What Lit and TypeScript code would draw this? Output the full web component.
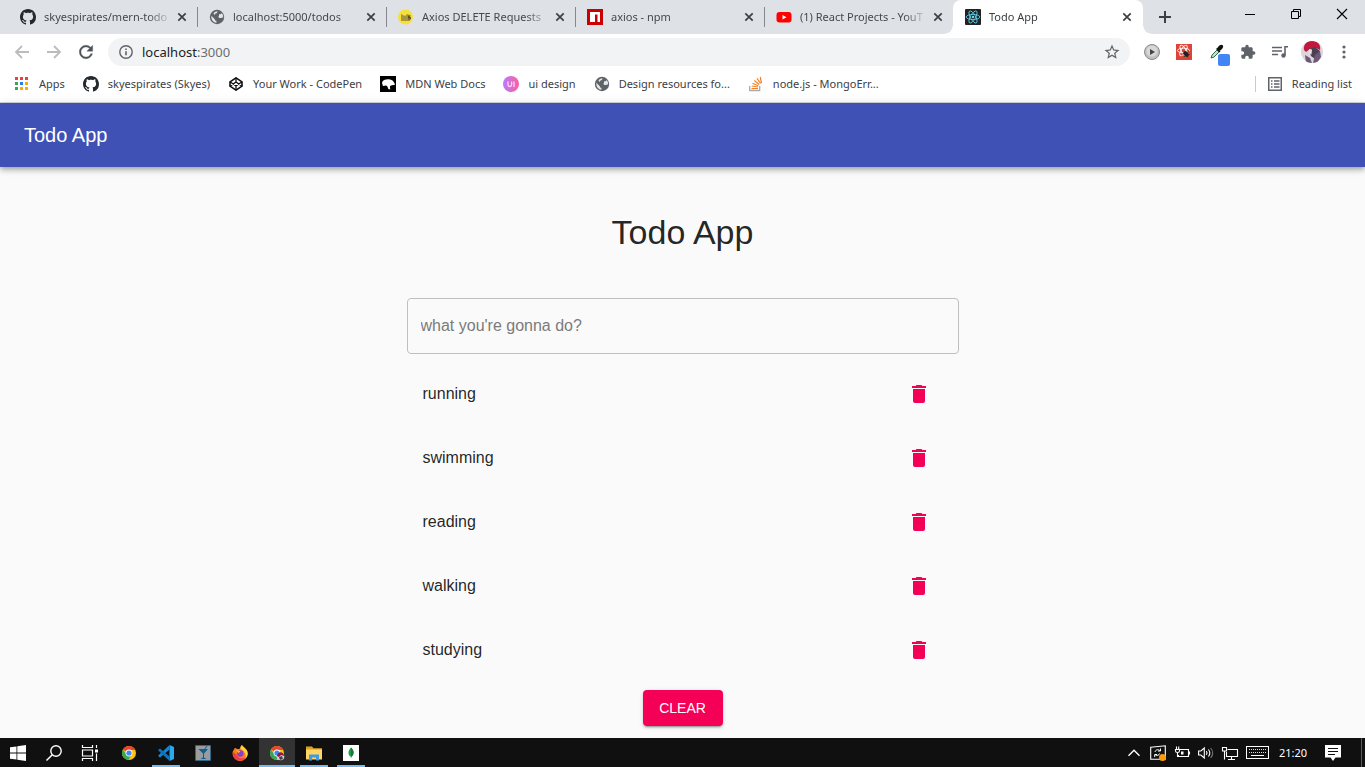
import { LitElement, html, css, svg, nothing } from "lit";
import { customElement, state } from "lit/decorators.js";
import { classMap } from "lit/directives/class-map.js";

const GITHUB =
  "M8 0C3.58 0 0 3.58 0 8c0 3.54 2.29 6.53 5.47 7.59.4.07.55-.17.55-.38 0-.19-.01-.82-.01-1.49-2.01.37-2.53-.49-2.69-.94-.09-.23-.48-.94-.82-1.13-.28-.15-.68-.52-.01-.53.63-.01 1.08.58 1.23.82.72 1.21 1.87.87 2.33.66.07-.52.28-.87.51-1.07-1.78-.2-3.64-.89-3.64-3.95 0-.87.31-1.59.82-2.15-.08-.2-.36-1.02.08-2.12 0 0 .67-.21 2.2.82.64-.18 1.32-.27 2-.27s1.36.09 2 .27c1.53-1.04 2.2-.82 2.2-.82.44 1.1.16 1.92.08 2.12.51.56.82 1.27.82 2.15 0 3.07-1.87 3.75-3.65 3.95.29.25.54.73.54 1.48 0 1.07-.01 1.93-.01 2.2 0 .21.15.46.55.38A8.01 8.01 0 0 0 16 8c0-4.42-3.58-8-8-8z";

const chromeLogo = svg`
  <circle cx="8" cy="8" r="7" fill="#fbc116"/>
  <path d="M8 8L1.94 4.5A7 7 0 0 1 14.06 4.5L14.4 5H8z" fill="#ea4335"/>
  <path d="M1.94 4.5A7 7 0 0 0 7.4 15L10.6 9.5 8 8 5.4 9.5z" fill="#34a853"/>
  <circle cx="8" cy="8" r="3.4" fill="#fff"/><circle cx="8" cy="8" r="2.6" fill="#4285f4"/>`;

const ICONS: Record<string, [number, unknown]> = {
  github: [16, svg`<path d=${GITHUB} fill="#24292e"/>`],
  globe: [16, svg`<circle cx="8" cy="8" r="7.200" fill="#5f6368"/><path d="M2.300 6.800L5.800 10.200c.1 1 .7 1.600 1.600 1.600v2.100C4.500 13.500 2 11 2.300 6.800zM5 7.500h4c.7 0 1-.4 1-1V5.300h1.200c.8 0 1.300-.5 1.400-1.200 1.300 1.200 1.700 3 1.500 4.700-.6-.6-1.500-.3-2.100.3h-1.700L9.200 7.500z" fill="#e4e6e8"/><path d="M4.500 4.500c1-1.500 2.500-2.200 4-2.200L8 4l-1.500.5L5.500 6z" fill="#e4e6e8"/>`],
  axios: [16, svg`<circle cx="7.5" cy="8" r="7.5" fill="#f7e03c"/><path d="M3 5l4 2 2-2 3 1v6H3z" fill="#a9983a"/><path d="M12.500 7h-2v1.500h2V10h-2.500" stroke="#4e4720" fill="none"/>`],
  npm: [16, svg`<rect width="16" height="16" fill="#cb0000"/><path d="M3 3h10v10h-2.500V5.500H8V13H3z" fill="#fff"/>`],
  youtube: [16, svg`<rect x=".5" y="3" width="15" height="10.500" rx="3" fill="#f00"/><path d="M6.500 6v4.500l4-2.250z" fill="#fff"/>`],
  react: [16, svg`<rect width="16" height="16" rx="1" fill="#222"/><g fill="none" stroke="#61dafb" stroke-width=".8"><ellipse cx="8" cy="8" rx="6.800" ry="2.600"/><ellipse cx="8" cy="8" rx="6.800" ry="2.600" transform="rotate(60 8 8)"/><ellipse cx="8" cy="8" rx="6.800" ry="2.600" transform="rotate(120 8 8)"/></g><circle cx="8" cy="8" r="1.300" fill="#61dafb"/>`],
  close: [16, svg`<path d="M4.3 4.3l7.4 7.4M11.7 4.3l-7.4 7.4" stroke="#3c4043" stroke-width="1.7"/>`],
  plus: [16, svg`<path d="M8 2v12M2 8h12" stroke="#3c4043" stroke-width="2"/>`],
  minimize: [16, svg`<path d="M3 8.500h10" stroke="#000"/>`],
  restore: [16, svg`<path d="M3.500 5.500h7v7h-7zM5.500 5.500v-2h7v7h-2" fill="none" stroke="#000"/>`],
  quit: [16, svg`<path d="M3 3l10 10M13 3L3 13" stroke="#000" stroke-width="1.100"/>`],
  back: [18, svg`<path d="M16 9H3M9 3L3 9l6 6" fill="none" stroke="#babcbe" stroke-width="1.800"/>`],
  forward: [18, svg`<path d="M2 9h13M9 3l6 6-6 6" fill="none" stroke="#babcbe" stroke-width="1.800"/>`],
  reload: [24, svg`<path d="M17.650 6.350C16.200 4.900 14.210 4 12 4c-4.420 0-7.990 3.580-7.990 8s3.570 8 7.990 8c3.730 0 6.840-2.550 7.730-6h-2.080c-.82 2.330-3.040 4-5.650 4-3.310 0-6-2.690-6-6s2.690-6 6-6c1.660 0 3.140.69 4.220 1.780L13 11h7V4l-2.350 2.350z" fill="#4f5357" stroke="#4f5357" stroke-width=".4"/>`],
  info: [16, svg`<circle cx="8" cy="8" r="6.200" fill="none" stroke="#5f6368" stroke-width="1.400"/><path d="M8 7.200v4M8 4.600v1.500" stroke="#5f6368" stroke-width="1.600"/>`],
  star: [24, svg`<path d="M22 9.240l-7.190-.62L12 2 9.190 8.630 2 9.240l5.460 4.730L5.820 21 12 17.270 18.180 21l-1.630-7.030L22 9.240zM12 15.400l-3.760 2.270 1-4.280-3.320-2.880 4.380-.38L12 6.100l1.710 4.040 4.380.38-3.320 2.880 1 4.280L12 15.400z" fill="#5f6368"/>`],
  apps: [16, svg`<path d="M1 1h3v3H1zM6 1h3v3H6zM11 1h3v3h-3z" fill="#ea4335"/><path d="M1 6h3v3H1zM1 11h3v3H1z" fill="#34a853"/><path d="M6 6h3v3H6z" fill="#2b7de9"/><path d="M11 6h3v3h-3zM6 11h3v3H6zM11 11h3v3h-3z" fill="#f9ab00"/>`],
  codepen: [16, svg`<g fill="none" stroke="#111" stroke-width="1.600" stroke-linejoin="round"><path d="M8 1.800l6 4v4.400l-6 4-6-4V5.800z"/><path d="M2 5.800l6 4.200 6-4.200M2 10.200L8 6l6 4.200M8 1.800V6M8 10v4.200" stroke-width="1.300"/></g>`],
  mdn: [16, svg`<rect width="16" height="16" fill="#000"/><path d="M2 7c.3-2 2-3.500 4.500-3.500C9 3 10.500 3.500 12 4.300c1.200.7 1.600 1.600 2.500 3l.5 1.500-3 .5c-1.500.3-2.300 1-2 2.500l.3 1.700-2-.5C8 11.500 7.500 10 6 9.500L3 10z" fill="#fff"/>`],
  uidesign: [16, svg`<defs><linearGradient id="uig"><stop offset="0" stop-color="#b57bff"/><stop offset="1" stop-color="#ff5f9c"/></linearGradient></defs><circle cx="8" cy="8" r="8" fill="url(#uig)"/><path d="M5 5.500v3.200c0 2.400 3.600 2.400 3.600 0V5.500M11 5.500V11" fill="none" stroke="#fbd6f2" stroke-width="1.300"/>`],
  stack: [16, svg`<path d="M1.700 10v4.500h10V10" fill="none" stroke="#aaa" stroke-width="1.300"/><path d="M3.500 12.500h6.500M3.700 10l6.300 1M4.500 7.300l5.800 2.500M6.300 4.500l5 4M9 2.300l3.600 5.200M12.200 1l1.300 6" stroke="#f48024" stroke-width="1.200"/>`],
  player: [16, svg`<circle cx="8" cy="8" r="7.500" fill="#c0c0c0" stroke="#8b8b8b"/><circle cx="8" cy="7" r="5.500" fill="#d8d8d8"/><path d="M6 5v6l5-3z" fill="#444"/>`],
  reactbug: [16, svg`<rect width="16" height="16" fill="#db4437"/><g fill="none" stroke="#fff" stroke-width=".9"><ellipse cx="7.500" cy="6.500" rx="6" ry="2.300"/><ellipse cx="7.500" cy="6.500" rx="6" ry="2.300" transform="rotate(60 7.500 6.500)"/><ellipse cx="7.500" cy="6.500" rx="6" ry="2.300" transform="rotate(120 7.500 6.500)"/></g><ellipse cx="10" cy="10" rx="2.200" ry="3.200" transform="rotate(-35 10 10)" fill="#222"/><path d="M6.500 9.500l7 1M8 13l5-6M8 7.500l4 6" stroke="#222" stroke-width=".8"/>`],
  picker: [24, svg`<path d="M7 18l1-3 5-5 2 2-5 5z" fill="#bfe3c8" stroke="#2f6b48" stroke-width="1"/><path d="M12.500 8.500l3.500 3.500M13.500 9c1-2.200 3.700-4.300 4.800-3.300 1 1.100-1.100 3.800-3.300 4.800z" stroke="#111" stroke-width="1.300" fill="#111"/><rect x="14" y="14" width="12" height="12" rx="2" fill="#4285f4"/>`],
  puzzle: [24, svg`<path d="M20.500 11H19V7c0-1.100-.9-2-2-2h-4V3.500C13 2.120 11.880 1 10.500 1S8 2.120 8 3.500V5H4c-1.100 0-1.990.9-1.990 2v3.800H3.500c1.490 0 2.700 1.210 2.700 2.700s-1.210 2.700-2.700 2.700H2V20c0 1.100.9 2 2 2h3.800v-1.500c0-1.490 1.210-2.700 2.700-2.700 1.490 0 2.700 1.210 2.700 2.700V22H17c1.100 0 2-.9 2-2v-4h1.500c1.380 0 2.500-1.120 2.500-2.500S21.880 11 20.500 11z" fill="#5f6368"/>`],
  queue: [16, svg`<path d="M0 3.500h10M0 7h10M0 10.500h6" stroke="#5f6368" stroke-width="1.500"/><path d="M16 2.800h-3v8.500" fill="none" stroke="#5f6368" stroke-width="1.600"/><circle cx="11.500" cy="11.500" r="2.200" fill="#5f6368"/>`],
  avatar: [22, svg`<defs><clipPath id="avc"><circle cx="11" cy="11" r="11"/></clipPath></defs><g clip-path="url(#avc)"><rect width="22" height="22" fill="#dcd5de"/><path d="M3 9C2 3 7-1 12 0c5 0 8 4 7 9l-4-2-6 1-4 3z" fill="#c2183c"/><path d="M8 8l6-2 5 4-1 6-4 2-4-3z" fill="#4b3f52"/><path d="M8 8l3 .5-.5 5L8 12z" fill="#eadfe4"/><path d="M4 14l5 3 2 5H5zM14 14l5-4 1 6-4 6h-4z" fill="#6a5a76"/></g>`],
  more: [16, svg`<g fill="#5f6368"><circle cx="8" cy="3" r="1.600"/><circle cx="8" cy="8" r="1.600"/><circle cx="8" cy="13" r="1.600"/></g>`],
  list: [16, svg`<rect x="1.750" y="1.750" width="12.500" height="12.500" fill="none" stroke="#5f6368" stroke-width="1.500"/><path d="M4 5h1.500M4 8h1.500M4 11h1.500M7 5h5.500M7 8h5.500M7 11h5.500" stroke="#5f6368" stroke-width="1.500"/>`],
  bin: [24, svg`<path d="M6 19c0 1.100.9 2 2 2h8c1.100 0 2-.9 2-2V7H6v12zM19 4h-3.500l-1-1h-5l-1 1H5v2h14V4z" fill="currentColor"/>`],
  windows: [16, svg`<path d="M0 2.300L6.500 1.400v6.200H0zM7.300 1.300L16 0v7.600H7.300zM0 8.400h6.500v6.200L0 13.700zM7.300 8.400H16V16l-8.700-1.300z" fill="#fff"/>`],
  search: [16, svg`<circle cx="10" cy="6" r="5.200" fill="none" stroke="#fff" stroke-width="1.400"/><path d="M6.300 9.700L.5 15.500" stroke="#fff" stroke-width="1.500"/>`],
  taskview: [16, svg`<path d="M.5 0v2.500h10V0M.5 16v-2.500h10V16M.5 5h10v6H.500zM14.500 0v3M14.500 8.500V16" fill="none" stroke="#fff" stroke-width="1.200"/><rect x="13" y="4.500" width="3" height="3" fill="#fff"/>`],
  chrome: [16, chromeLogo],
  chromeuser: [16, svg`${chromeLogo}<circle cx="11.500" cy="11.500" r="3.800" fill="#d9ccd4"/><path d="M8 11c0-5 7-5 7 0l-3-1-2 2z" fill="#8d1c3e"/><path d="M10 12l3-1 1 3-3 1z" fill="#4d3b55"/>`],
  vscode: [16, svg`<path d="M11.500 0L16 2v12l-4.500 2z" fill="#2aa9f2"/><path d="M11.500 0v4.500L2 12.500.3 11.200V10.400z" fill="#1684cf"/><path d="M11.500 16v-4.500L2 3.500.3 4.800v.8z" fill="#0e73bb"/>`],
  cocktail: [16, svg`<rect x=".5" y=".5" width="15" height="15" fill="#9b9b9b" stroke="#1f6f9e" stroke-dasharray="2 1"/><path d="M3.500 4h9.500L9 8.500v4l2.500 1.500h-6L8 12.500v-4z" fill="#0f5f8f"/><path d="M9 5l3-4" stroke="#0f5f8f"/>`],
  firefox: [16, svg`<path d="M2.500 4C2 2.500 4 3 5 4c1 0 2-.5 3-.3C8 2 9 .8 10 0c.5 2 5.700 3.500 5.700 8.500A7.600 7.600 0 0 1 .5 8.500C.4 6.500 1.500 5 2.500 4z" fill="#ff7a1a"/><path d="M10 0c.5 2 5.700 3.500 5.700 8.500 0 2-1 4-2.500 5.500C15 8 11 5 8.500 4 8.400 2.500 9 1 10 0z" fill="#ffd43a"/><path d="M1 7c-.5 6 3 8.500 7 8.600 3 0 5-1.600 6-3-3 1.500-8 1.300-9.500-3z" fill="#f4384f"/><circle cx="8.300" cy="8.500" r="3.200" fill="#8a3fd1"/><path d="M4 5.500c2-.5 3 .5 4.500 1L6.500 8z" fill="#ffb02a"/>`],
  explorer: [16, svg`<path d="M0 1.500h6l1.500 1.800H16V14H0z" fill="#e0a21b"/><path d="M0 4.500h16V14.500H0z" fill="#ffd666"/><path d="M3 15.500V9.500h10v6h-3v-3H6v3z" fill="#3f9ce0"/>`],
  mongo: [16, svg`<rect width="16" height="16" fill="#fff"/><path d="M8 2.500c2 2 3 4 2.500 6-.3 1.600-1.200 2.500-2.200 3.200L8 13.500l-.3-1.800C6.600 11 5.700 10 5.500 8.500 5.200 6.500 6.300 4.500 8 2.500z" fill="#1d9c47"/><path d="M8 2.500v11l.3-1.800c1-.7 1.900-1.600 2.200-3.200.5-2-.5-4-2.500-6z" fill="#147a35"/>`],
  chevron: [16, svg`<path d="M2.500 10.800L8 5.300l5.500 5.500" fill="none" stroke="#fff" stroke-width="1.400"/>`],
  sync: [16, svg`<path d="M.7 2.200L15.300.8v13.500H.7z" fill="none" stroke="#fff" stroke-width="1.100"/><path d="M5 7c.5-2.500 3.500-3 5-1.200M10.500 3.500V6H8M9.500 8.500c-.5 2.200-3 2.700-4.300 1.200M4.700 12V9.500h2.500" fill="none" stroke="#fff" stroke-width="1"/><circle cx="12.500" cy="12.500" r="3.500" fill="#ff9a0a"/>`],
  battery: [16, svg`<path d="M6 4.500h8.500v7H4.500V10M15.500 6.500v3M1 4.500h5M1.500 4.500V6c0 2 4 2 4 0V4.500M2.500 4V1.500M4.700 4V1.500M3.500 7.500V12" fill="none" stroke="#fff" stroke-width="1.100"/><path d="M7 6.500h2.500v3H7z" fill="#fff"/>`],
  speaker: [16, svg`<path d="M.6 6h2.300L6.300 3v10L2.900 10H.6z" fill="none" stroke="#fff" stroke-width="1.100"/><path d="M8.300 6.200c.9 1.100.9 2.500 0 3.600M10.400 4.500c1.800 2.200 1.800 4.800 0 7" fill="none" stroke="#fff" stroke-width="1.100"/><path d="M12.600 3c2.700 3.200 2.700 6.800 0 10" fill="none" stroke="#777" stroke-width="1.100"/>`],
  network: [16, svg`<path d="M5.500 4.500h10v7h-11V7M9.500 11.500v3M6 14.500h7M.5 2.500h4v3.500h-4zM2.500 6v8.500" fill="none" stroke="#fff" stroke-width="1.100"/>`],
  bell: [18, svg`<path d="M1 1h16v12.500h-5.500L9 17l-2.500-3.500H1z" fill="#fff"/><path d="M4 4.500h10M4 7.500h10M4 10.500h7" stroke="#111" stroke-width="1"/>`],
};

const icon = (name: string, size = 16) => {
  const [box, art] = ICONS[name];
  return html`<svg width=${size} height=${size} viewBox="0 0 ${box} ${box}" aria-hidden="true">${art}</svg>`;
};

const shared = css`
  :host {
    display: block;
    flex: none;
  }
  * {
    box-sizing: border-box;
  }
  svg {
    display: block;
    flex: none;
    overflow: visible;
  }
  button {
    display: flex;
    align-items: center;
    justify-content: center;
    flex: none;
    padding: 0;
    border: 0;
    background: none;
    font: inherit;
    color: inherit;
  }
  a {
    color: inherit;
    text-decoration: none;
  }
`;

@customElement("browser-tabs")
class BrowserTabs extends LitElement {
  static styles = [
    shared,
    css`
      .strip {
        display: flex;
        height: 34px;
        padding-left: 8px;
        background: #dee1e6;
        color: #45484c;
        font: 11px/16px "Noto Sans", sans-serif;
      }
      .tab {
        display: flex;
        align-items: center;
        gap: 8px;
        flex: 0 1 189px;
        min-width: 0;
        padding: 0 7px 0 12px;
        position: relative;
      }
      .tab.divided::after {
        content: "";
        position: absolute;
        right: -1px;
        top: 7px;
        height: 20px;
        width: 1px;
        background: #85888d;
      }
      .tab.active {
        flex-basis: 190px;
        padding-right: 8px;
        background: #fff;
        border-radius: 8px 8px 0 0;
        color: #3c4043;
      }
      .tab.active::before,
      .tab.active::after {
        content: "";
        position: absolute;
        bottom: 0;
        width: 8px;
        height: 8px;
      }
      .tab.active::before {
        left: -8px;
        background: radial-gradient(circle at 0 0, transparent 7px, #fff 8px);
      }
      .tab.active::after {
        right: -8px;
        background: radial-gradient(circle at 100% 0, transparent 7px, #fff 8px);
      }
      .title {
        flex: 1;
        min-width: 0;
        margin-right: -6px;
        overflow: hidden;
        white-space: nowrap;
        mask-image: linear-gradient(to left, transparent, #000 24px);
      }
      .add {
        width: 28px;
        margin-left: 8px;
      }
      .window {
        display: flex;
        height: 28px;
        margin-left: auto;
      }
      .window button {
        width: 46px;
      }
    `,
  ];

  tabs = [
    { icon: "github", title: "skyespirates/mern-todo" },
    { icon: "globe", title: "localhost:5000/todos" },
    { icon: "axios", title: "Axios DELETE Requests" },
    { icon: "npm", title: "axios - npm" },
    { icon: "youtube", title: "(1) React Projects - YouT" },
    { icon: "react", title: "Todo App" },
  ];

  render() {
    const last = this.tabs.length - 1;
    return html`<div class="strip">
      ${this.tabs.map(
        (t, i) => html`<div class=${classMap({ tab: true, active: i === last, divided: i < last - 1 })}>
          ${icon(t.icon)}<span class="title">${t.title}</span>
          <button aria-label="Close tab">${icon("close")}</button>
        </div>`
      )}
      <button class="add" aria-label="New tab">${icon("plus")}</button>
      <div class="window">
        <button aria-label="Minimize">${icon("minimize")}</button>
        <button aria-label="Restore">${icon("restore")}</button>
        <button aria-label="Close">${icon("quit")}</button>
      </div>
    </div>`;
  }
}

@customElement("browser-toolbar")
class BrowserToolbar extends LitElement {
  static styles = [
    shared,
    css`
      .bar {
        display: flex;
        align-items: center;
        height: 36px;
        padding: 0 5px 0 6px;
        background: #fff;
      }
      .bar > button {
        width: 32px;
        height: 32px;
      }
      .address {
        display: flex;
        align-items: center;
        flex: 1;
        gap: 8px;
        height: 28px;
        margin: 0 6px;
        padding: 0 9px 0 10px;
        border-radius: 14px;
        background: #f1f3f4;
        font: 13px/20px "Noto Sans", sans-serif;
        color: #202124;
      }
      .url {
        flex: 1;
      }
      .port {
        color: #6b6f73;
      }
    `,
  ];

  render() {
    return html`<div class="bar">
      <button aria-label="Back">${icon("back", 18)}</button>
      <button aria-label="Forward">${icon("forward", 18)}</button>
      <button aria-label="Reload">${icon("reload", 20)}</button>
      <div class="address">
        ${icon("info")}<span class="url">localhost<span class="port">:3000</span></span>
        <button aria-label="Bookmark this tab">${icon("star", 18)}</button>
      </div>
      <button aria-label="Media player">${icon("player")}</button>
      <button aria-label="React Developer Tools">${icon("reactbug")}</button>
      <button aria-label="Colour picker">${icon("picker", 24)}</button>
      <button aria-label="Extensions">${icon("puzzle")}</button>
      <button aria-label="Media controls">${icon("queue")}</button>
      <button aria-label="Profile">${icon("avatar", 22)}</button>
      <button aria-label="Menu">${icon("more")}</button>
    </div>`;
  }
}

@customElement("bookmark-bar")
class BookmarkBar extends LitElement {
  static styles = [
    shared,
    css`
      .bar {
        display: flex;
        align-items: center;
        gap: 18px;
        height: 33px;
        padding: 0 13px 5px 14px;
        background: #fff;
        border-bottom: 1px solid #d5d7da;
        font: 11px/16px "Noto Sans", sans-serif;
        color: #3c4043;
        white-space: nowrap;
      }
      .mark {
        display: flex;
        align-items: center;
        gap: 9px;
      }
      .reading {
        gap: 9px;
        margin-left: auto;
        padding-left: 11px;
        border-left: 1px solid #c8cacd;
      }
    `,
  ];

  marks = [
    ["apps", "Apps"],
    ["github", "skyespirates (Skyes)"],
    ["codepen", "Your Work - CodePen"],
    ["mdn", "MDN Web Docs"],
    ["uidesign", "ui design"],
    ["globe", "Design resources fo..."],
    ["stack", "node.js - MongoErr..."],
  ];

  render() {
    return html`<nav class="bar" aria-label="Bookmarks">
      ${this.marks.map(([name, label]) => html`<a class="mark" href="#">${icon(name)}${label}</a>`)}
      <button class="reading">${icon("list")}Reading list</button>
    </nav>`;
  }
}

@customElement("todo-page")
class TodoPage extends LitElement {
  static styles = [
    shared,
    css`
      :host {
        flex: 1 0 auto;
        background: #fafafa;
        color: rgba(0, 0, 0, 0.87);
        font: 16px/24px "Liberation Sans", Arial, sans-serif;
      }
      .appbar {
        display: flex;
        align-items: center;
        height: 64px;
        padding: 0 24px;
        background: #3f51b5;
        color: #fff;
        font-size: 20px;
        line-height: 32px;
        box-shadow: 0 2px 4px -1px rgba(0, 0, 0, 0.2), 0 4px 5px 0 rgba(0, 0, 0, 0.14),
          0 1px 10px 0 rgba(0, 0, 0, 0.12);
      }
      .content {
        display: flex;
        flex-direction: column;
        align-items: center;
        max-width: 600px;
        margin: 0 auto;
        padding: 44px 24px 12px;
      }
      h1 {
        margin: 0 0 45px;
        font-size: 34px;
        line-height: 42px;
        font-weight: 400;
      }
      form {
        width: 100%;
      }
      input {
        display: block;
        width: 100%;
        height: 56px;
        padding: 0 13px;
        border: 1px solid #bfbfbf;
        border-radius: 4px;
        background: transparent;
        font: inherit;
        color: inherit;
        outline: none;
      }
      input::placeholder {
        color: #7b7b7b;
        opacity: 1;
      }
      ul {
        width: 100%;
        margin: 0;
        padding: 8px 0;
        list-style: none;
      }
      li {
        display: flex;
        align-items: center;
        justify-content: space-between;
        height: 64px;
        padding: 0 16px;
      }
      .remove {
        width: 48px;
        height: 48px;
        border-radius: 50%;
        color: #f50057;
      }
      .clear {
        min-width: 80px;
        height: 36px;
        padding: 0 16px;
        border-radius: 4px;
        background: #f50057;
        color: #fff;
        font-size: 14px;
        text-transform: uppercase;
        box-shadow: 0 3px 1px -2px rgba(0, 0, 0, 0.2), 0 2px 2px 0 rgba(0, 0, 0, 0.14),
          0 1px 5px 0 rgba(0, 0, 0, 0.12);
      }
    `,
  ];

  @state() todos = ["running", "swimming", "reading", "walking", "studying"];

  private add(e: Event) {
    e.preventDefault();
    const field = this.renderRoot.querySelector("input")!;
    const text = field.value.trim();
    if (text) this.todos = [...this.todos, text];
    field.value = "";
  }

  render() {
    return html`<header class="appbar">Todo App</header>
      <main class="content">
        <h1>Todo App</h1>
        <form @submit=${this.add}>
          <input aria-label="New todo" placeholder="what you're gonna do?" />
        </form>
        <ul>
          ${this.todos.map(
            (todo, i) => html`<li>
              ${todo}
              <button
                class="remove"
                aria-label="Delete ${todo}"
                @click=${() => (this.todos = this.todos.filter((_, n) => n !== i))}
              >
                ${icon("bin", 24)}
              </button>
            </li>`
          )}
        </ul>
        ${this.todos.length
          ? html`<button class="clear" @click=${() => (this.todos = [])}>Clear</button>`
          : nothing}
      </main>`;
  }
}

@customElement("task-bar")
class TaskBar extends LitElement {
  static styles = [
    shared,
    css`
      .bar {
        display: flex;
        height: 29px;
        background: #101010;
        color: #fff;
        font: 11px/16px "Noto Sans", sans-serif;
      }
      .bar button {
        width: 36px;
      }
      .apps {
        display: flex;
        gap: 1px;
        margin-left: 3px;
      }
      .app {
        position: relative;
      }
      .app.open::after {
        content: "";
        position: absolute;
        left: 4px;
        right: 4px;
        bottom: 0;
        height: 2px;
        background: #76b9ed;
      }
      .app.current {
        background: #333;
      }
      .app.current::after {
        left: 0;
        right: 0;
      }
      .tray {
        display: flex;
        align-items: center;
        gap: 8px;
        margin-left: auto;
      }
      .tray time {
        margin-left: 2px;
      }
      .desktop {
        width: 4px;
        height: 29px;
        margin-left: 2px;
        border-left: 1px solid #5a5a5a;
      }
      .bar .note {
        width: 18px;
        margin: 0 9px;
      }
    `,
  ];

  apps = [
    ["chrome", ""],
    ["vscode", "open"],
    ["cocktail", ""],
    ["firefox", ""],
    ["chromeuser", "current"],
    ["explorer", "open"],
    ["mongo", "open"],
  ];

  render() {
    return html`<footer class="bar">
      <button aria-label="Start">${icon("windows")}</button>
      <button aria-label="Search">${icon("search")}</button>
      <button aria-label="Task view">${icon("taskview")}</button>
      <div class="apps">
        ${this.apps.map(
          ([name, mode]) => html`<button
            class=${classMap({ app: true, open: mode !== "", current: mode === "current" })}
            aria-label=${name}
          >
            ${icon(name)}
          </button>`
        )}
      </div>
      <div class="tray">
        ${["chevron", "sync", "battery", "speaker", "network"].map((n) => icon(n))}
        <svg width="23" height="13" viewBox="0 0 23 13" aria-hidden="true">
          <rect x=".5" y=".5" width="22" height="12" fill="none" stroke="#fff" />
          <path d="M3 3.500h17M3 6.500h17" stroke="#ddd" stroke-dasharray="1 1" />
          <path d="M5 9.500h13" stroke="#fff" />
        </svg>
        <time>21:20</time>
        <button class="note" aria-label="Notifications">${icon("bell", 18)}</button>
        <span class="desktop"></span>
      </div>
    </footer>`;
  }
}

@customElement("app-root")
class AppRoot extends LitElement {
  static styles = css`
    :host {
      display: flex;
      flex-direction: column;
      min-height: 100vh;
    }
  `;

  render() {
    return html`<browser-tabs></browser-tabs>
      <browser-toolbar></browser-toolbar>
      <bookmark-bar></bookmark-bar>
      <todo-page></todo-page>
      <task-bar></task-bar>`;
  }
}
